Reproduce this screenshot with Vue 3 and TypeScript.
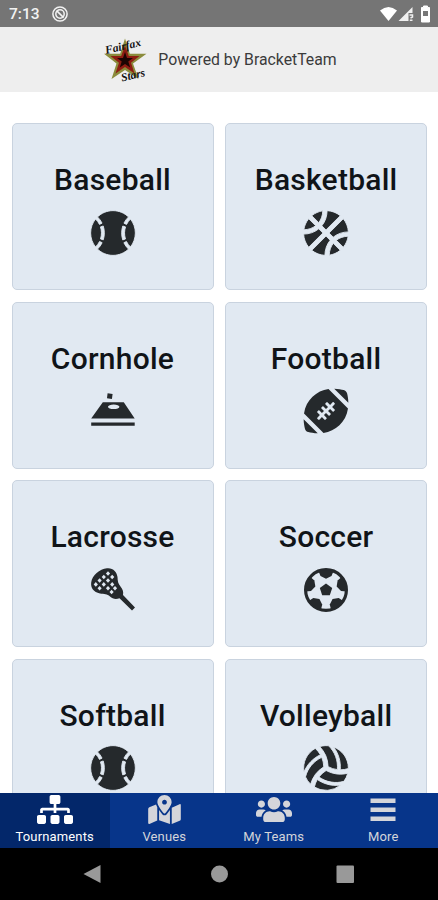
<script setup lang="ts">
interface Sport { name: string; icon: string }

const sports: Sport[] = [
  { name: 'Baseball', icon: 'baseball' },
  { name: 'Basketball', icon: 'basketball' },
  { name: 'Cornhole', icon: 'cornhole' },
  { name: 'Football', icon: 'football' },
  { name: 'Lacrosse', icon: 'lacrosse' },
  { name: 'Soccer', icon: 'soccer' },
  { name: 'Softball', icon: 'baseball' },
  { name: 'Volleyball', icon: 'volleyball' },
]

// Single-path ball glyphs, drawn on a 496 or 512 unit square
const balls: Record<string, { box: string; d: string }> = {
  baseball: {
    box: '4 12 488 488',
    d: 'M368.5 363.9l28.8-13.9c11.1 22.9 26 43.2 44.1 60.9 34-42.5 54.5-96.3 54.5-154.9 0-58.5-20.4-112.2-54.2-154.6-17.8 17.3-32.6 37.1-43.6 59.5l-28.7-14.1c12.8-26 30-49 50.8-69C375.6 34.7 315 8 248 8 181.1 8 120.5 34.6 75.9 77.7c20.7 19.9 37.9 42.9 50.7 68.8l-28.7 14.1c-11-22.3-25.7-42.1-43.5-59.4C20.4 143.7 0 197.4 0 256c0 58.6 20.4 112.3 54.4 154.7 18.2-17.7 33.2-38 44.3-61l28.8 13.9c-12.9 26.7-30.3 50.3-51.5 70.7 44.5 43.1 105.1 69.7 172 69.7 66.8 0 127.3-26.5 171.9-69.5-21.1-20.4-38.5-43.9-51.4-70.6zm-228.3-32l-30.5-9.8c14.9-46.4 12.7-93.8-.6-134l30.4-10c15 45.6 18 99.9.7 153.8zm216.3-153.4l30.4 10c-13.2 40.1-15.5 87.5-.6 134l-30.5 9.8c-17.3-54-14.3-108.3.7-153.8z',
  },
  basketball: {
    box: '4 12 488 488',
    d: 'M212.3 10.3c-43.8 6.3-86.2 24.1-122.2 53.8l77.4 77.4c27.8-35.8 43.3-81.2 44.8-131.2zM248 222L405.9 64.1c-42.4-35-93.6-53.5-145.5-56.1-1.2 63.9-21.5 122.3-58.7 167.7L248 222zM56.1 98.1c-29.7 36-47.5 78.4-53.8 122.2 50-1.5 95.5-17 131.2-44.8L56.1 98.1zm272.2 204.2c45.3-37.1 103.7-57.4 167.7-58.7-2.6-51.9-21.1-103.1-56.1-145.5L282 256l46.3 46.3zM248 290L90.1 447.9c42.4 34.9 93.6 53.5 145.5 56.1 1.3-64 21.6-122.4 58.7-167.7L248 290zm191.9 123.9c29.7-36 47.5-78.4 53.8-122.2-50.1 1.6-95.5 17.1-131.2 44.8l77.4 77.4zM167.7 209.7C122.3 246.9 63.9 267.3 0 268.4c2.6 51.9 21.1 103.1 56.1 145.5L214 256l-46.3-46.3zm116 292c43.8-6.3 86.2-24.1 122.2-53.8l-77.4-77.4c-27.7 35.7-43.2 81.2-44.8 131.2z',
  },
  football: {
    box: '4 12 488 488',
    d: 'M481.5 60.3c-4.8-18.2-19.1-32.5-37.3-37.4C420.3 16.5 383 8.9 339.4 8L496 164.8c-.8-43.5-8.2-80.6-14.5-104.5zm-467 391.4c4.8 18.2 19.1 32.5 37.3 37.4 23.9 6.4 61.2 14 104.8 14.9L0 347.2c.8 43.5 8.2 80.6 14.5 104.5zM4.2 283.4L220.4 500c132.5-19.4 248.8-118.7 271.5-271.4L275.6 12C143.1 31.4 26.8 130.7 4.2 283.4zm317.3-123.6c3.1-3.1 8.2-3.1 11.3 0l11.3 11.3c3.1 3.1 3.1 8.2 0 11.3l-28.3 28.3 28.3 28.3c3.1 3.1 3.1 8.2 0 11.3l-11.3 11.3c-3.1 3.1-8.2 3.1-11.3 0l-28.3-28.3-22.6 22.7 28.3 28.3c3.1 3.1 3.1 8.2 0 11.3l-11.3 11.3c-3.1 3.1-8.2 3.1-11.3 0L248 278.6l-22.6 22.6 28.3 28.3c3.1 3.1 3.1 8.2 0 11.3l-11.3 11.3c-3.1 3.1-8.2 3.1-11.3 0l-28.3-28.3-28.3 28.3c-3.1 3.1-8.2 3.1-11.3 0l-11.3-11.3c-3.1-3.1-3.1-8.2 0-11.3l28.3-28.3-28.3-28.2c-3.1-3.1-3.1-8.2 0-11.3l11.3-11.3c3.1-3.1 8.2-3.1 11.3 0l28.3 28.3 22.6-22.6-28.3-28.3c-3.1-3.1-3.1-8.2 0-11.3l11.3-11.3c3.1-3.1 8.2-3.1 11.3 0l28.3 28.3 22.6-22.6-28.3-28.3c-3.1-3.1-3.1-8.2 0-11.3l11.3-11.3c3.1-3.1 8.2-3.1 11.3 0l28.3 28.3 28.3-28.5z',
  },
  volleyball: {
    box: '12 12 488 488',
    d: 'M231.39 243.48a285.56 285.56 0 0 0-22.7-105.7c-90.8 42.4-157.5 122.4-180.3 216.8a249 249 0 0 0 56.9 81.1 333.87 333.87 0 0 1 146.1-192.2zm-36.9-134.4a284.23 284.23 0 0 0-57.4-70.7c-91 49.8-144.8 152.9-125 262.2 33.4-83.1 98.4-152 182.4-191.5zm187.6 165.1c8.6-99.8-27.3-197.5-97.5-264.4-14.7-1.7-51.6-5.5-98.9 8.5A333.87 333.87 0 0 1 279.19 241a285 285 0 0 0 102.9 33.18zm-124.7 9.5a286.33 286.33 0 0 0-80.2 72.6c82 57.3 184.5 75.1 277.5 47.8a247.15 247.15 0 0 0 42.2-89.9 336.1 336.1 0 0 1-80.9 10.4c-54.6-.1-108.9-14.1-158.6-40.9zm-98.3 99.7c-15.2 26-25.7 54.4-32.1 84.2a247.07 247.07 0 0 0 289-22.1c-112.9 16.1-203.3-24.8-256.9-62.1zm180.3-360.6c55.3 70.4 82.5 161.2 74.6 253.6a286.59 286.59 0 0 0 89.7-14.2c0-2 .3-4 .3-6 0-107.8-68.7-199.1-164.6-233.4z',
  },
}

// Centres of the openings in the lacrosse net
const netHoles: [number, number][] = [
  [19, 7.5], [14.8, 11], [23.2, 11], [10.6, 14.5], [19, 14.5],
  [6.8, 18.4], [14.8, 18.4], [23.2, 18.4], [10.6, 22.3], [19, 22.3], [26, 22.3], [22.6, 26],
]

const tabs = [
  { label: 'Tournaments', box: '0 0 640 512', w: 36, h: 29, d: 'M128 352H32c-17.67 0-32 14.33-32 32v96c0 17.67 14.33 32 32 32h96c17.67 0 32-14.33 32-32v-96c0-17.67-14.33-32-32-32zm-24-80h192v48h48v-48h192v48h48v-57.59c0-21.17-17.23-38.41-38.41-38.41H344v-64h40c17.67 0 32-14.33 32-32V32c0-17.67-14.33-32-32-32H256c-17.67 0-32 14.33-32 32v96c0 17.67 14.33 32 32 32h40v64H94.41C73.23 224 56 241.23 56 262.41V320h48v-48zm264 80h-96c-17.67 0-32 14.33-32 32v96c0 17.67 14.33 32 32 32h96c17.67 0 32-14.33 32-32v-96c0-17.67-14.33-32-32-32zm240 0h-96c-17.67 0-32 14.33-32 32v96c0 17.67 14.33 32 32 32h96c17.67 0 32-14.33 32-32v-96c0-17.67-14.33-32-32-32z' },
  { label: 'Venues', box: '0 0 576 512', w: 33, h: 29, d: 'M288 0c-69.59 0-126 56.41-126 126 0 56.26 82.35 158.8 113.9 196.02 6.39 7.54 17.82 7.54 24.2 0C331.65 284.8 414 182.26 414 126 414 56.41 357.59 0 288 0zm0 168c-23.2 0-42-18.8-42-42s18.8-42 42-42 42 18.8 42 42-18.8 42-42 42zM20.12 215.95A32.006 32.006 0 0 0 0 245.66v250.32c0 11.32 11.43 19.06 21.94 14.86L160 448V214.92c-8.84-15.98-16.07-31.54-21.25-46.42L20.12 215.95zM288 359.67c-14.07 0-27.38-6.18-36.51-16.96-19.66-23.2-40.57-49.62-59.49-76.72v182l192 64V266c-18.92 27.09-39.82 53.52-59.49 76.72-9.13 10.77-22.44 16.95-36.51 16.95zm266.06-198.51L416 224v288l139.88-55.95A31.996 31.996 0 0 0 576 426.34V176.02c0-11.32-11.43-19.06-21.94-14.86z' },
  { label: 'My Teams', box: '0 0 640 512', w: 36, h: 29, d: 'M96 224c35.3 0 64-28.7 64-64s-28.7-64-64-64-64 28.7-64 64 28.7 64 64 64zm448 0c35.3 0 64-28.7 64-64s-28.7-64-64-64-64 28.7-64 64 28.7 64 64 64zm32 32h-64c-17.6 0-33.5 7.1-45.1 18.6 40.3 22.1 68.9 62 75.1 109.4h66c17.7 0 32-14.3 32-32v-32c0-35.3-28.7-64-64-64zm-256 0c61.9 0 112-50.1 112-112S381.9 32 320 32 208 82.1 208 144s50.1 112 112 112zm76.8 32h-8.3c-20.8 10-43.9 16-68.5 16s-47.6-6-68.5-16h-8.3C179.6 288 128 339.6 128 403.2V432c0 26.5 21.5 48 48 48h288c26.5 0 48-21.5 48-48v-28.8c0-63.6-51.6-115.2-115.2-115.2zm-223.7-13.4C161.5 263.1 145.6 256 128 256H64c-35.3 0-64 28.7-64 64v32c0 17.7 14.3 32 32 32h65.900c6.300-47.400 34.900-87.300 75.200-109.400z' },
  { label: 'More', box: '0 0 36 29', w: 36, h: 29, d: 'M5.5 3.500h25v4.500h-25zM5.500 12.400h25v4.500h-25zM5.500 21.400h25v4.600h-25z' },
]
</script>

<template>
  <div class="phone">
    <div class="status">
      <span class="clock">7:13</span>
      <svg class="dnd" viewBox="0 0 16 16">
        <circle cx="8" cy="8" r="7.1" fill="none" stroke="#f2f2f2" stroke-width="1.5" />
        <circle cx="8" cy="8" r="4.2" fill="none" stroke="#f2f2f2" stroke-width="1.5" />
        <path d="M4.6 4.6l7 7" stroke="#f2f2f2" stroke-width="1.5" />
      </svg>
      <svg class="signals" viewBox="0 0 52 18">
        <path d="M1 5.600Q9.500-1.800 18 5.600L9.500 16z" fill="#fff" />
        <path d="M33.500 2v6h-4v8H19.500z" fill="#f0f0f0" />
        <path d="M30.500 10h3v2l-2 1.200M30.800 15.200h2.700" fill="none" stroke="#f0f0f0" stroke-width="1.500" />
        <path d="M42.500 2.500h2V1h4v1.500h2V17h-8z" fill="#fff" stroke="#fff" stroke-linejoin="round" />
        <path d="M44 6h5v5h-5z" fill="#777" />
      </svg>
    </div>

    <header class="brand">
      <svg class="logo" viewBox="0 0 48 48">
        <path d="M24 2.500L28.800 17.700H45.500L32 27.500 37.500 43 24 34 10.500 43 15.500 27.500 3 17.700H19.200z" fill="#8b8c3c" />
        <path d="M24 9.500L27.800 20H38.500L30 26.700 33.500 37.500 24 31 14.500 37.500 18 26.700 9.500 20H20.200z" fill="#8e1d12" />
        <path d="M24 16L26 22H32L27.300 25.500 29.200 31.500 24 28 18.800 31.500 20.700 25.500 16 22H22z" fill="#1c0503" />
        <text x="5" y="18" transform="rotate(-13 5 18)">Fairfax</text>
        <text x="21" y="45.500" transform="rotate(-13 21 45.500)">Stars</text>
      </svg>
      <span>Powered by BracketTeam</span>
    </header>

    <main class="grid">
      <div v-for="s in sports" :key="s.name" class="card">
        <h2>{{ s.name }}</h2>
        <svg v-if="balls[s.icon]" class="icon" :class="{ seams: s.icon !== 'football' }" :viewBox="balls[s.icon].box"><path :d="balls[s.icon].d" /></svg>
        <svg v-else-if="s.icon === 'cornhole'" class="icon" viewBox="2 2 44 44">
          <path d="M18.600 6.200l5 .8-.7 5-4.900-.8z" />
          <path fill-rule="evenodd" d="M13.800 15.200h21L45.700 31.500H2.200zM19 19.800a5.700 2.300 0 1 0 11.400 0 5.700 2.300 0 1 0-11.400 0z" />
          <path d="M2.200 35.500h43.500v3.300H2.200z" />
        </svg>
        <svg v-else-if="s.icon === 'lacrosse'" class="icon" viewBox="2 2 44 44">
          <path d="M18 2.200C24 1.500 28 6 28.500 11c.2 4 .5 6.500 3 9.500 2.500 3 3 5.500 2.500 8.500l12 12.500-3 3-12.500-12.300c-3.500 1.300-7 .8-9.500-1.700-3-3-5.500-2-10-3C4.500 26 1.500 22 2.200 16.500 3.200 9 10.500 3 18 2.200z" />
          <path v-for="(h, i) in netHoles" :key="i" class="hole" :d="`M${h[0]} ${h[1] - 2.3}l2.100 2.300-2.100 2.300-2.100-2.300z`" />
        </svg>
        <svg v-else class="icon" viewBox="-22 -22 44 44">
          <circle r="20.400" fill="none" stroke="#25292c" stroke-width="3.200" />
          <path d="M0-6.500L6.200-2 3.800 5.300H-3.800L-6.200-2z" />
          <path v-for="n in 5" :key="n" :transform="`rotate(${n * 72})`" d="M-7.800-19.500H7.800L5.500-14 0-11.200-5.500-14z" />
        </svg>
      </div>
    </main>

    <nav class="tabs">
      <div v-for="(t, i) in tabs" :key="t.label" class="tab" :class="{ active: i === 0 }">
        <svg :width="t.w" :height="t.h" :viewBox="t.box"><path :d="t.d" /></svg>
        <span>{{ t.label }}</span>
      </div>
    </nav>

    <div class="system">
      <svg viewBox="0 0 438 52">
        <path d="M83.500 26L100.500 17v18z" />
        <circle cx="219.500" cy="26" r="8.500" />
        <rect x="336.500" y="17.500" width="17.500" height="17.500" rx="1" />
      </svg>
    </div>
  </div>
</template>

<style>
body { margin: 0; overflow: hidden; }
</style>

<style scoped>
.phone {
  display: flex;
  flex-direction: column;
  width: 438px;
  height: 900px;
  overflow: hidden;
  background: #fff;
  font-family: Roboto, "Liberation Sans", sans-serif;
}
.status {
  display: flex;
  align-items: center;
  flex: none;
  height: 27px;
  padding: 0 7px 0 9px;
  background: #757575;
  color: #f2f2f2;
}
.clock { font-size: 15.500px; font-weight: 500; width: 43px; padding-top: 1px; }
.dnd { width: 16px; height: 16px; }
.signals { width: 52px; height: 18px; margin-left: auto; }
.brand {
  display: flex;
  align-items: center;
  justify-content: center;
  gap: 9px;
  flex: none;
  height: 65px;
  background: #eee;
  color: #3b3b3b;
  font-size: 15.800px;
}
.logo { width: 48px; height: 48px; }
.logo text {
  font: italic bold 11.500px "Liberation Serif", serif;
  fill: #111;
}
.grid {
  display: grid;
  grid-template-columns: 202px 202px;
  grid-auto-rows: 167px;
  gap: 11.400px 11.600px;
  flex: 1;
  min-height: 0;
  overflow: hidden;
  padding: 31.400px 0 0 11.500px;
}
.card {
  display: flex;
  flex-direction: column;
  align-items: center;
  box-sizing: border-box;
  padding-top: 38px;
  border: 1px solid #c9d3df;
  border-radius: 5px;
  background: #e1e9f2;
}
h2 {
  margin: 0;
  font-size: 30px;
  letter-spacing: 0.250px;
  line-height: 36px;
  font-weight: 500;
  color: #101418;
}
.icon {
  width: 44px;
  height: 44px;
  margin-top: 12.500px;
  fill: #25292c;
  overflow: visible;
}
.seams { stroke: #e1e9f2; stroke-width: 10; }
.hole { fill: #e1e9f2; }
.tabs {
  display: grid;
  grid-template-columns: repeat(4, 1fr);
  flex: none;
  height: 55px;
  background: #07358a;
}
.tab {
  display: flex;
  flex-direction: column;
  align-items: center;
  padding-top: 2px;
  color: #d4d5da;
  font-size: 13px;
  letter-spacing: 0.150px;
}
.tab svg { fill: currentColor; }
.tab span { line-height: 16px; margin-top: 5px; }
.active { background: #03276a; color: #fff; }
.system { flex: none; height: 52px; background: #000; }
.system svg { display: block; width: 438px; height: 52px; fill: #999; }
</style>
